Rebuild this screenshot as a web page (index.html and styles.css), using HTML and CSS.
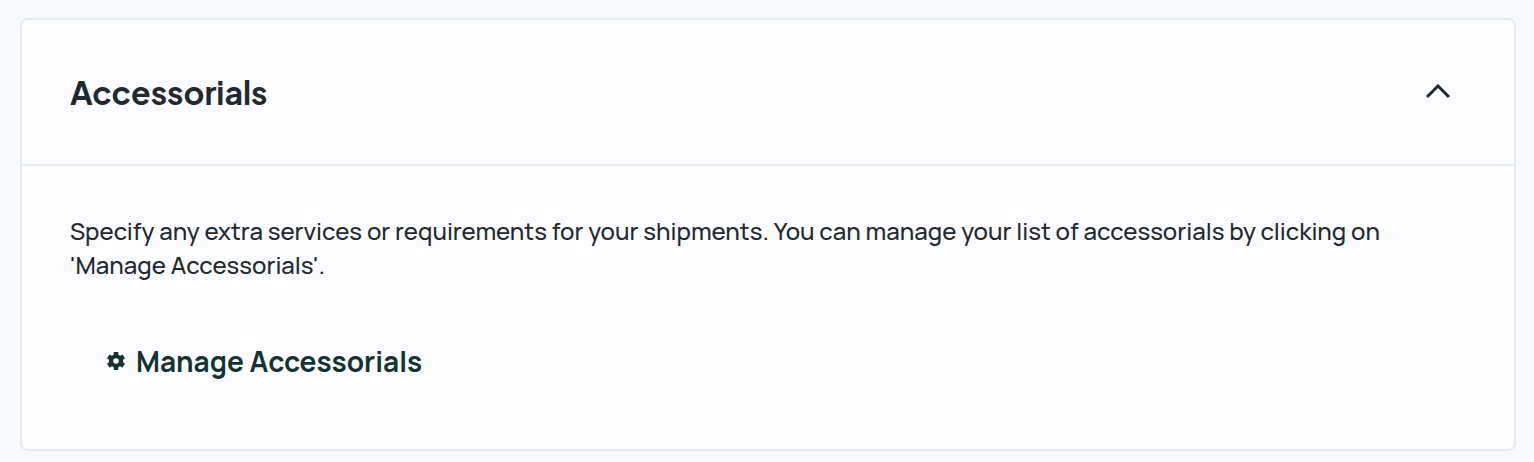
FILE: index.html
```html
<!DOCTYPE html>
<html lang="en">
<head>
  <meta charset="UTF-8">
  <meta name="viewport" content="width=device-width, initial-scale=1.0">
  <title>Accessorials</title>
  <link rel="stylesheet" href="styles.css">
</head>
<body>
  <section class="card">
    <header class="card-header">
      <h2>Accessorials</h2>
      <button class="toggle" type="button" aria-label="Collapse" aria-expanded="true" aria-controls="cardBody">
        <svg width="24" height="16" viewBox="0 0 24 16" fill="none" stroke="currentColor" stroke-width="3">
          <path d="M1 13 L12 2 L23 13"/>
        </svg>
      </button>
    </header>
    <div class="card-body" id="cardBody">
      <p>Specify any extra services or requirements for your shipments. You can manage your list of accessorials by clicking on 'Manage Accessorials'.</p>
      <button class="manage-btn" type="button">
        <svg width="20" height="20" viewBox="0 0 20 20" fill="currentColor">
          <path fill-rule="evenodd" d="M7.7 1h4.600v2.700l1.700 1L16.600 3.400 19 7.400l-2 1.400v2.400l2 1.400-2.400 4-2.600-1.300-1.700 1V19H7.700v-2.700l-1.700-1-2.600 1.300L1 12.600l2-1.400V8.800L1 7.400l2.400-4L6 4.700l1.700-1zM10 7.200a2.800 2.800 0 1 0 0 5.600 2.800 2.800 0 0 0 0-5.600z"/>
        </svg>
        Manage Accessorials
      </button>
    </div>
  </section>
</body>
</html>
```
FILE: styles.css
```css
* {
  margin: 0;
  padding: 0;
  box-sizing: border-box;
}

body {
  font-family: Manrope, Inter, 'Open Sans', sans-serif;
  background: #f8f9fb;
  color: #212930;
  padding: 18px 18px 10px 20px;
}

.card {
  background: #fcfcfe;
  border: 2px solid #e6ecf0;
  border-radius: 8px;
}

.card-header {
  display: flex;
  align-items: center;
  justify-content: space-between;
  padding: 48px;
  border-bottom: 2px solid #e6ecf0;
}

.card-header h2 {
  font-family: 'Plus Jakarta Sans', Manrope, Inter, sans-serif;
  font-size: 32px;
  line-height: 48px;
  font-weight: 700;
}

.toggle {
  display: flex;
  padding: 12px 16px;
  border: 0;
  background: none;
  color: #212930;
  cursor: pointer;
}

.card-body {
  padding: 48px;
}

.card-body p {
  font-size: 24px;
  font-weight: 500;
  line-height: 34px;
}

.manage-btn {
  display: flex;
  align-items: center;
  gap: 10px;
  margin-top: 39px;
  padding: 20px 36px;
  border: 0;
  background: none;
  color: #143433;
  font-family: inherit;
  font-size: 28px;
  font-weight: 700;
  line-height: 40px;
  cursor: pointer;
}
```
